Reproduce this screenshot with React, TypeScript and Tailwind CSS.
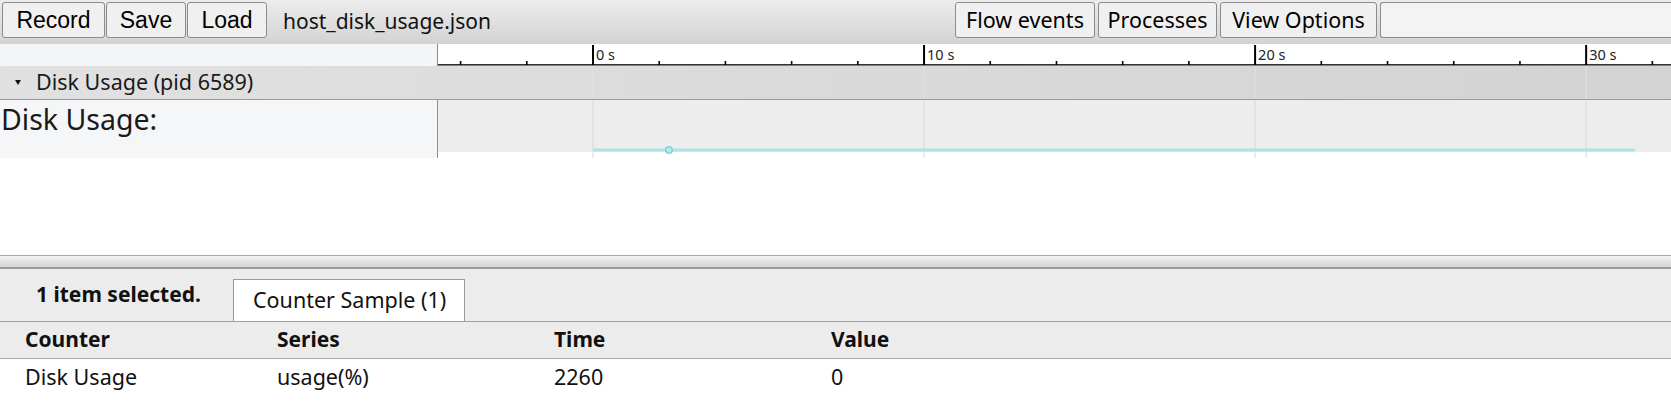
import React from "react";

const ORIGIN = 155;
const MAJOR = 331.05;
const MINOR = MAJOR / 5;
const CANVAS_W = 1233;

const ticks: { x: number; major: boolean; label?: string }[] = [];
for (let k = -2; ORIGIN + k * MINOR < CANVAS_W; k++) {
  const x = ORIGIN + k * MINOR;
  const major = k % 5 === 0;
  ticks.push({ x, major, label: major ? `${(k / 5) * 10} s` : undefined });
}
const majors = ticks.filter((t) => t.major);

const sans = "font-['Noto_Sans',sans-serif]";

function ToolButton({ label, w, arial }: { label: string; w: string; arial?: boolean }) {
  return (
    <button
      className={`${w} h-[36px] shrink-0 rounded-[3px] border border-[#8c8c8c] bg-[#f0f0f0] text-black ${
        arial ? "font-['Liberation_Sans',Arial,sans-serif] text-[23px]" : `${sans} text-[21.5px]`
      }`}
    >
      {label}
    </button>
  );
}

function Toolbar() {
  return (
    <div className="flex h-[44px] shrink-0 items-start gap-[1px] overflow-hidden bg-gradient-to-b from-[#ececec] to-[#d3d3d3] pt-[2px] pl-[2px]">
      <ToolButton arial label="Record" w="w-[103px]" />
      <ToolButton arial label="Save" w="w-[80px]" />
      <ToolButton arial label="Load" w="w-[80px]" />
      <span className={`ml-[15px] h-[36px] leading-[38px] text-[21px] text-[#111] ${sans}`}>
        host_disk_usage.json
      </span>
      <div className="ml-auto flex gap-[3px]">
        <ToolButton label="Flow events" w="w-[140px]" />
        <ToolButton label="Processes" w="w-[119px]" />
        <ToolButton label="View Options" w="w-[157px]" />
        <input
          className="h-[36px] w-[291px] rounded-l-[3px] border border-r-0 border-[#8c8c8c] bg-[#f3f3f3] outline-none"
          readOnly
        />
      </div>
    </div>
  );
}

function Ruler() {
  return (
    <div className="flex h-[22px] shrink-0">
      <div className="w-[437px] shrink-0 bg-[#f4f5f7]" />
      <div className="flex-1 border-l border-[#8a8a8a] bg-white">
        <svg className="block h-full w-full">
          <rect fill="#000" height="1.3" width={CANVAS_W} x="0" y="20.2" />
          {ticks.map((t) =>
            t.major ? (
              <g key={t.x}>
                <rect fill="#000" height="20" width="2" x={t.x - 1} y="1" />
                <text
                  fill="#222"
                  fontFamily="Noto Sans, sans-serif"
                  fontSize="14.5"
                  x={t.x + 3}
                  y="15.5"
                >
                  {t.label}
                </text>
              </g>
            ) : (
              <rect fill="#000" height="4" key={t.x} width="1.6" x={t.x - 0.8} y="17" />
            ),
          )}
        </svg>
      </div>
    </div>
  );
}

function TrackHeader() {
  return (
    <div className="relative flex h-[34px] shrink-0 items-center border-b border-[#9a9a9a] bg-gradient-to-r from-[#e1e1e1] to-[#d3d3d3]">
      <svg className="ml-[15px] shrink-0" height="6" width="6">
        <polygon fill="#111" points="0,0 6,0 3,5" />
      </svg>
      <span className={`ml-[15px] text-[21.5px] text-[#1a1a1a] ${sans}`}>Disk Usage (pid 6589)</span>
      <svg className="pointer-events-none absolute top-0 left-[438px] h-full w-[1233px]">
        {majors.map((t) => (
          <rect fill="#e2e2e2" height="34" key={t.x} width="1" x={t.x - 0.5} y="0" />
        ))}
      </svg>
    </div>
  );
}

function CounterTrack() {
  return (
    <div className="flex h-[58px] shrink-0">
      <div className="w-[438px] shrink-0 border-r border-[#8f8f8f] bg-[#f5f6f8]">
        <div className={`pl-[1px] text-[28.5px] leading-[38px] text-[#1a1a1a] ${sans}`}>Disk Usage:</div>
      </div>
      <div className="flex-1">
        <svg className="block h-full w-full">
          <rect fill="#ededed" height="52" width={CANVAS_W} x="0" y="0" />
          {majors.map((t) => (
            <rect fill="#d9d9d9" height="58" key={t.x} width="1" x={t.x - 0.5} y="0" />
          ))}
          <rect fill="#aee2e7" height="3" width={1197 - ORIGIN} x={ORIGIN} y="48.5" />
          <circle cx="231" cy="50" fill="#b6e8ec" r="3.3" stroke="#80d0d8" strokeWidth="1.5" />
        </svg>
      </div>
    </div>
  );
}

function Splitter() {
  return (
    <div className="h-[14px] shrink-0 border-t border-b-2 border-t-[#a8a8a8] border-b-[#999] bg-gradient-to-b from-[#f2f2f2] to-[#d4d4d4]" />
  );
}

function Details() {
  const cols = "grid grid-cols-[252px_277px_277px_1fr] pl-[25px]";
  return (
    <div className={`flex flex-1 flex-col bg-white ${sans} text-[21.5px] text-[#111]`}>
      <div className="flex h-[53px] shrink-0 items-end border-b border-[#a0a0a0] bg-[#ececec]">
        <div className="flex h-full w-[233px] shrink-0 items-center pl-[36px] text-[21px] font-bold">
          1 item selected.
        </div>
        <div className="flex h-[42px] w-[232px] items-center border border-b-0 border-[#9a9a9a] bg-white pl-[19px]">
          Counter Sample (1)
        </div>
      </div>
      <div
        className={`${cols} h-[37px] shrink-0 items-center border-b border-[#aaa] bg-[#ececec] text-[21px] font-bold`}
      >
        <span>Counter</span>
        <span>Series</span>
        <span>Time</span>
        <span>Value</span>
      </div>
      <div className={`${cols} h-[36px] shrink-0 items-center`}>
        <span>Disk Usage</span>
        <span>usage(%)</span>
        <span>2260</span>
        <span>0</span>
      </div>
    </div>
  );
}

export default function App() {
  return (
    <div className="flex h-[415px] w-full flex-col overflow-hidden bg-white">
      <Toolbar />
      <Ruler />
      <TrackHeader />
      <CounterTrack />
      <div className="h-[97px] shrink-0 bg-white" />
      <Splitter />
      <Details />
    </div>
  );
}
